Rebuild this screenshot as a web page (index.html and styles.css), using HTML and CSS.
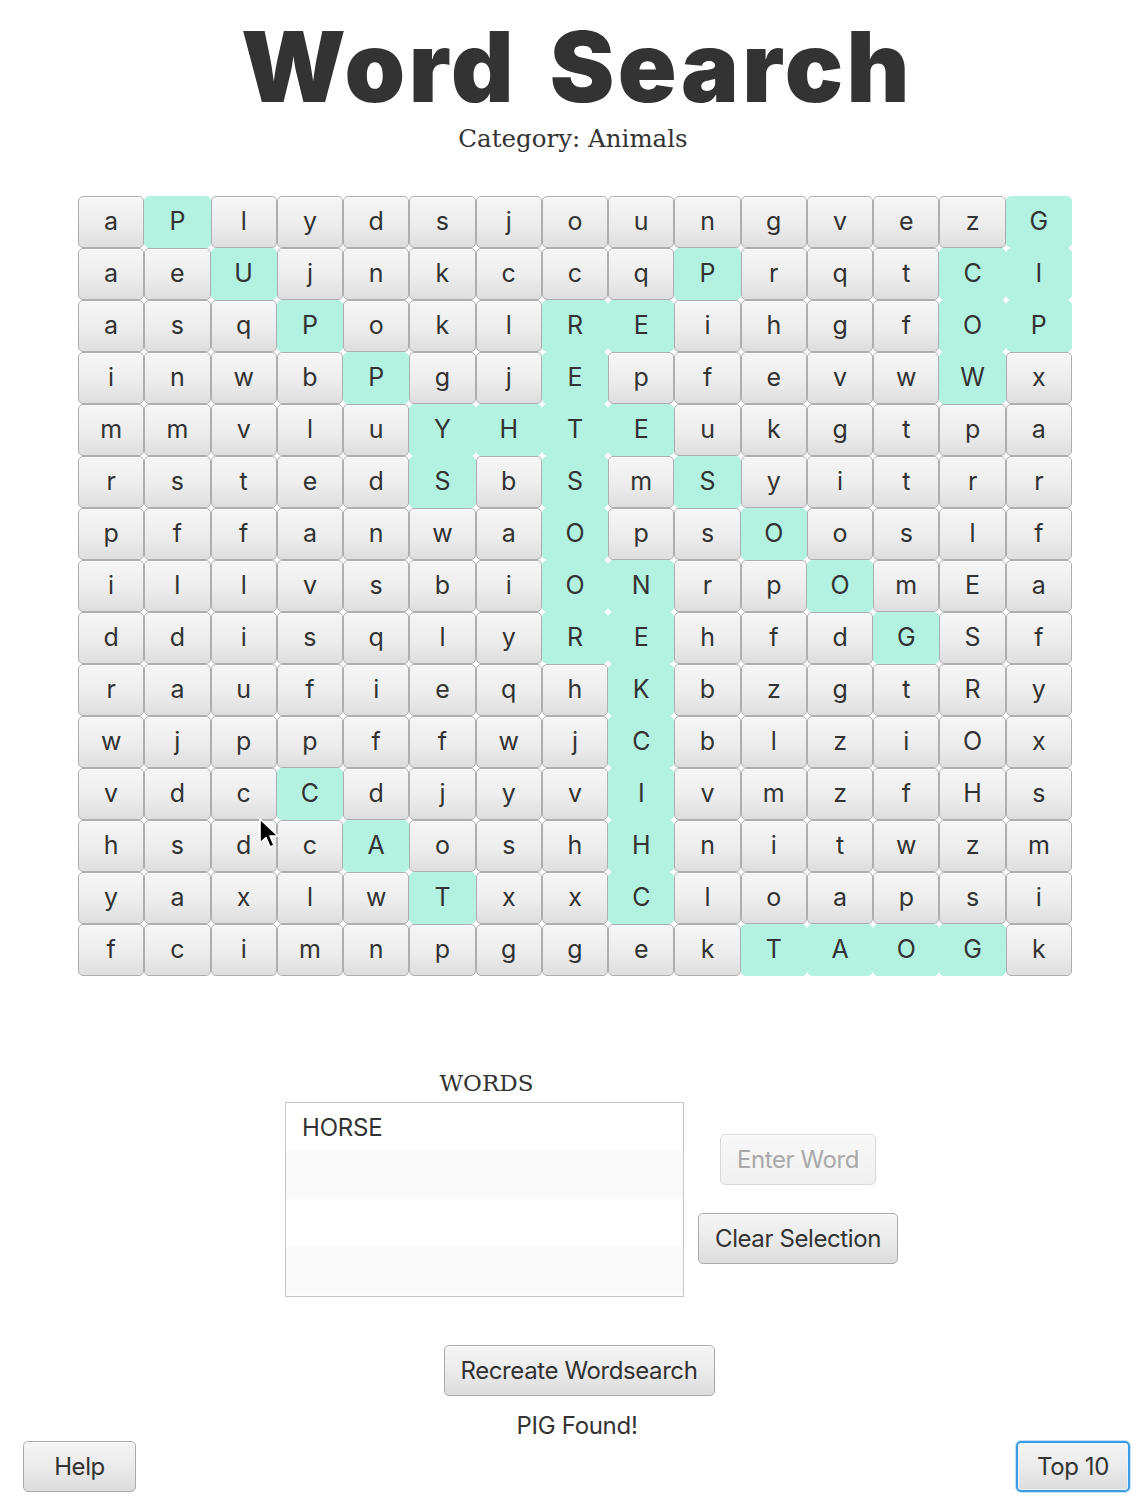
FILE: index.html
```html
<!DOCTYPE html>
<html lang="en">
<head>
<meta charset="utf-8">
<title>Word Search</title>
<link rel="stylesheet" href="styles.css">
</head>
<body>
<main class="page">
  <h1 class="title">Word Search</h1>
  <p class="category">Category: Animals</p>

  <div class="board">
    <div class="grid">
      <span class="cell">a</span><span class="cell hit">P</span><span class="cell">l</span><span class="cell">y</span><span class="cell">d</span><span class="cell">s</span><span class="cell">j</span><span class="cell">o</span><span class="cell">u</span><span class="cell">n</span><span class="cell">g</span><span class="cell">v</span><span class="cell">e</span><span class="cell">z</span><span class="cell hit">G</span>
      <span class="cell">a</span><span class="cell">e</span><span class="cell hit">U</span><span class="cell">j</span><span class="cell">n</span><span class="cell">k</span><span class="cell">c</span><span class="cell">c</span><span class="cell">q</span><span class="cell hit">P</span><span class="cell">r</span><span class="cell">q</span><span class="cell">t</span><span class="cell hit">C</span><span class="cell hit">I</span>
      <span class="cell">a</span><span class="cell">s</span><span class="cell">q</span><span class="cell hit">P</span><span class="cell">o</span><span class="cell">k</span><span class="cell">l</span><span class="cell hit">R</span><span class="cell hit">E</span><span class="cell">i</span><span class="cell">h</span><span class="cell">g</span><span class="cell">f</span><span class="cell hit">O</span><span class="cell hit">P</span>
      <span class="cell">i</span><span class="cell">n</span><span class="cell">w</span><span class="cell">b</span><span class="cell hit">P</span><span class="cell">g</span><span class="cell">j</span><span class="cell hit">E</span><span class="cell">p</span><span class="cell">f</span><span class="cell">e</span><span class="cell">v</span><span class="cell">w</span><span class="cell hit">W</span><span class="cell">x</span>
      <span class="cell">m</span><span class="cell">m</span><span class="cell">v</span><span class="cell">l</span><span class="cell">u</span><span class="cell hit">Y</span><span class="cell hit">H</span><span class="cell hit">T</span><span class="cell hit">E</span><span class="cell">u</span><span class="cell">k</span><span class="cell">g</span><span class="cell">t</span><span class="cell">p</span><span class="cell">a</span>
      <span class="cell">r</span><span class="cell">s</span><span class="cell">t</span><span class="cell">e</span><span class="cell">d</span><span class="cell hit">S</span><span class="cell">b</span><span class="cell hit">S</span><span class="cell">m</span><span class="cell hit">S</span><span class="cell">y</span><span class="cell">i</span><span class="cell">t</span><span class="cell">r</span><span class="cell">r</span>
      <span class="cell">p</span><span class="cell">f</span><span class="cell">f</span><span class="cell">a</span><span class="cell">n</span><span class="cell">w</span><span class="cell">a</span><span class="cell hit">O</span><span class="cell">p</span><span class="cell">s</span><span class="cell hit">O</span><span class="cell">o</span><span class="cell">s</span><span class="cell">l</span><span class="cell">f</span>
      <span class="cell">i</span><span class="cell">l</span><span class="cell">l</span><span class="cell">v</span><span class="cell">s</span><span class="cell">b</span><span class="cell">i</span><span class="cell hit">O</span><span class="cell hit">N</span><span class="cell">r</span><span class="cell">p</span><span class="cell hit">O</span><span class="cell">m</span><span class="cell">E</span><span class="cell">a</span>
      <span class="cell">d</span><span class="cell">d</span><span class="cell">i</span><span class="cell">s</span><span class="cell">q</span><span class="cell">l</span><span class="cell">y</span><span class="cell hit">R</span><span class="cell hit">E</span><span class="cell">h</span><span class="cell">f</span><span class="cell">d</span><span class="cell hit">G</span><span class="cell">S</span><span class="cell">f</span>
      <span class="cell">r</span><span class="cell">a</span><span class="cell">u</span><span class="cell">f</span><span class="cell">i</span><span class="cell">e</span><span class="cell">q</span><span class="cell">h</span><span class="cell hit">K</span><span class="cell">b</span><span class="cell">z</span><span class="cell">g</span><span class="cell">t</span><span class="cell">R</span><span class="cell">y</span>
      <span class="cell">w</span><span class="cell">j</span><span class="cell">p</span><span class="cell">p</span><span class="cell">f</span><span class="cell">f</span><span class="cell">w</span><span class="cell">j</span><span class="cell hit">C</span><span class="cell">b</span><span class="cell">l</span><span class="cell">z</span><span class="cell">i</span><span class="cell">O</span><span class="cell">x</span>
      <span class="cell">v</span><span class="cell">d</span><span class="cell">c</span><span class="cell hit">C</span><span class="cell">d</span><span class="cell">j</span><span class="cell">y</span><span class="cell">v</span><span class="cell hit">I</span><span class="cell">v</span><span class="cell">m</span><span class="cell">z</span><span class="cell">f</span><span class="cell">H</span><span class="cell">s</span>
      <span class="cell">h</span><span class="cell">s</span><span class="cell">d</span><span class="cell">c</span><span class="cell hit">A</span><span class="cell">o</span><span class="cell">s</span><span class="cell">h</span><span class="cell hit">H</span><span class="cell">n</span><span class="cell">i</span><span class="cell">t</span><span class="cell">w</span><span class="cell">z</span><span class="cell">m</span>
      <span class="cell">y</span><span class="cell">a</span><span class="cell">x</span><span class="cell">l</span><span class="cell">w</span><span class="cell hit">T</span><span class="cell">x</span><span class="cell">x</span><span class="cell hit">C</span><span class="cell">l</span><span class="cell">o</span><span class="cell">a</span><span class="cell">p</span><span class="cell">s</span><span class="cell">i</span>
      <span class="cell">f</span><span class="cell">c</span><span class="cell">i</span><span class="cell">m</span><span class="cell">n</span><span class="cell">p</span><span class="cell">g</span><span class="cell">g</span><span class="cell">e</span><span class="cell">k</span><span class="cell hit">T</span><span class="cell hit">A</span><span class="cell hit">O</span><span class="cell hit">G</span><span class="cell">k</span>
    </div>
    <svg class="cursor" width="22" height="32" viewBox="0 0 22 32" aria-hidden="true">
      <path d="M2 1 L2 25 L8 19.5 L12 29 L16 27.3 L12 18 L20 18 Z" fill="#000" stroke="#fff" stroke-width="1.6" stroke-linejoin="round"/>
    </svg>
  </div>

  <section class="words">
    <div class="words-label">WORDS</div>
    <ul class="word-list">
      <li>HORSE</li>
      <li></li>
      <li></li>
      <li></li>
    </ul>
    <div class="actions">
      <button class="btn" disabled>Enter Word</button>
      <button class="btn">Clear Selection</button>
    </div>
  </section>

  <div class="recreate">
    <button class="btn btn-wide">Recreate Wordsearch</button>
  </div>
  <p class="status">PIG Found!</p>

  <footer class="footer">
    <button class="btn btn-help">Help</button>
    <button class="btn btn-top focused">Top 10</button>
  </footer>
</main>
</body>
</html>
```

FILE: styles.css
```css
* { box-sizing: border-box; }

html, body {
  margin: 0;
  padding: 0;
  background: #ffffff;
}

body {
  font-family: "Inter", "Liberation Sans", "Noto Sans", sans-serif;
  color: #333333;
}

.page {
  width: 1146px;
  height: 1508px;
  display: flex;
  flex-direction: column;
  align-items: stretch;
}

.title {
  margin: 0;
  padding-top: 12px;
  text-align: center;
  font-family: "Inter", "Liberation Sans", sans-serif;
  font-weight: 900;
  font-size: 97px;
  line-height: 110px;
  letter-spacing: 3.4px;
  word-spacing: 10px;
  color: #333333;
  padding-left: 8px;
}

.category {
  margin: 0;
  margin-top: 2px;
  text-align: center;
  font-family: "DejaVu Serif", "Liberation Serif", serif;
  font-size: 24.5px;
  line-height: 30px;
  color: #333333;
  letter-spacing: 0;
}

.board {
  position: relative;
  margin-top: 42px;
  padding-left: 78px;
}

.grid {
  display: grid;
  grid-template-columns: repeat(15, 66.27px);
  grid-template-rows: repeat(15, 52px);
  width: 994px;
}

.cell {
  display: flex;
  align-items: center;
  justify-content: center;
  border: 1px solid #aeaeae;
  border-radius: 5px;
  background: linear-gradient(#f6f6f6 0%, #ededed 55%, #dedede 100%);
  box-shadow: inset 0 1px 0 rgba(255,255,255,0.9);
  font-size: 25px;
  line-height: 1;
  padding-bottom: 1px;
  color: #333333;
}

.cell.hit {
  background: #b3f2e1;
  border-color: #b3f2e1;
  box-shadow: none;
}

.cursor {
  position: absolute;
  left: 258px;
  top: 622px;
}

.words {
  margin-top: 92px;
  display: grid;
  grid-template-columns: 399px max-content;
  grid-template-rows: auto auto;
  justify-content: start;
  column-gap: 14px;
  padding-left: 285px;
}

.words-label {
  grid-column: 1;
  grid-row: 1;
  text-align: center;
  font-family: "DejaVu Serif", "Liberation Serif", serif;
  font-size: 23px;
  line-height: 30px;
  letter-spacing: 0;
  padding-left: 4px;
  margin-bottom: 4px;
}

.word-list {
  grid-column: 1;
  grid-row: 2;
  list-style: none;
  margin: 0;
  padding: 0;
  height: 195px;
  border: 1px solid #c6c6c6;
  background: #ffffff;
  overflow: hidden;
}

.word-list li {
  height: 48px;
  padding-left: 16px;
  display: flex;
  align-items: center;
  font-size: 24px;
  letter-spacing: -0.2px;
  color: #333333;
}

.word-list li:nth-child(even) {
  background: #f9f9f9;
}

.actions {
  grid-column: 2;
  grid-row: 2;
  display: flex;
  flex-direction: column;
  align-items: center;
  justify-content: center;
  gap: 28px;
  padding-bottom: 2px;
}

.btn {
  height: 51px;
  padding: 0 16px;
  border: 1px solid #aaaaaa;
  border-radius: 5px;
  background: linear-gradient(#f5f5f5 0%, #ebebeb 50%, #dcdcdc 100%);
  box-shadow: inset 0 1px 0 rgba(255,255,255,0.9);
  font-family: "Inter", "Liberation Sans", sans-serif;
  font-size: 24px;
  letter-spacing: -0.4px;
  color: #333333;
}

.btn:disabled {
  color: #a9a9a9;
  border-color: #d8d8d8;
  background: linear-gradient(#f8f8f8, #f0f0f0);
}

.recreate {
  margin-top: 48px;
  display: flex;
  justify-content: center;
  padding-left: 12px;
}

.btn-wide {
  width: 271px;
}

.status {
  margin: 0;
  margin-top: 13px;
  text-align: center;
  font-size: 24px;
  line-height: 34px;
  letter-spacing: -0.3px;
  padding-left: 8px;
}

.footer {
  display: flex;
  justify-content: space-between;
  align-items: center;
  margin-top: -2px;
  padding: 0 16px 0 23px;
}

.btn-help {
  width: 113px;
}

.btn-top {
  width: 114px;
}

.btn.focused {
  border: 2px solid #3d9be0;
  box-shadow: 0 0 0 1px #bfe2f8, inset 0 0 0 1px #e9f3fb;
}
```
